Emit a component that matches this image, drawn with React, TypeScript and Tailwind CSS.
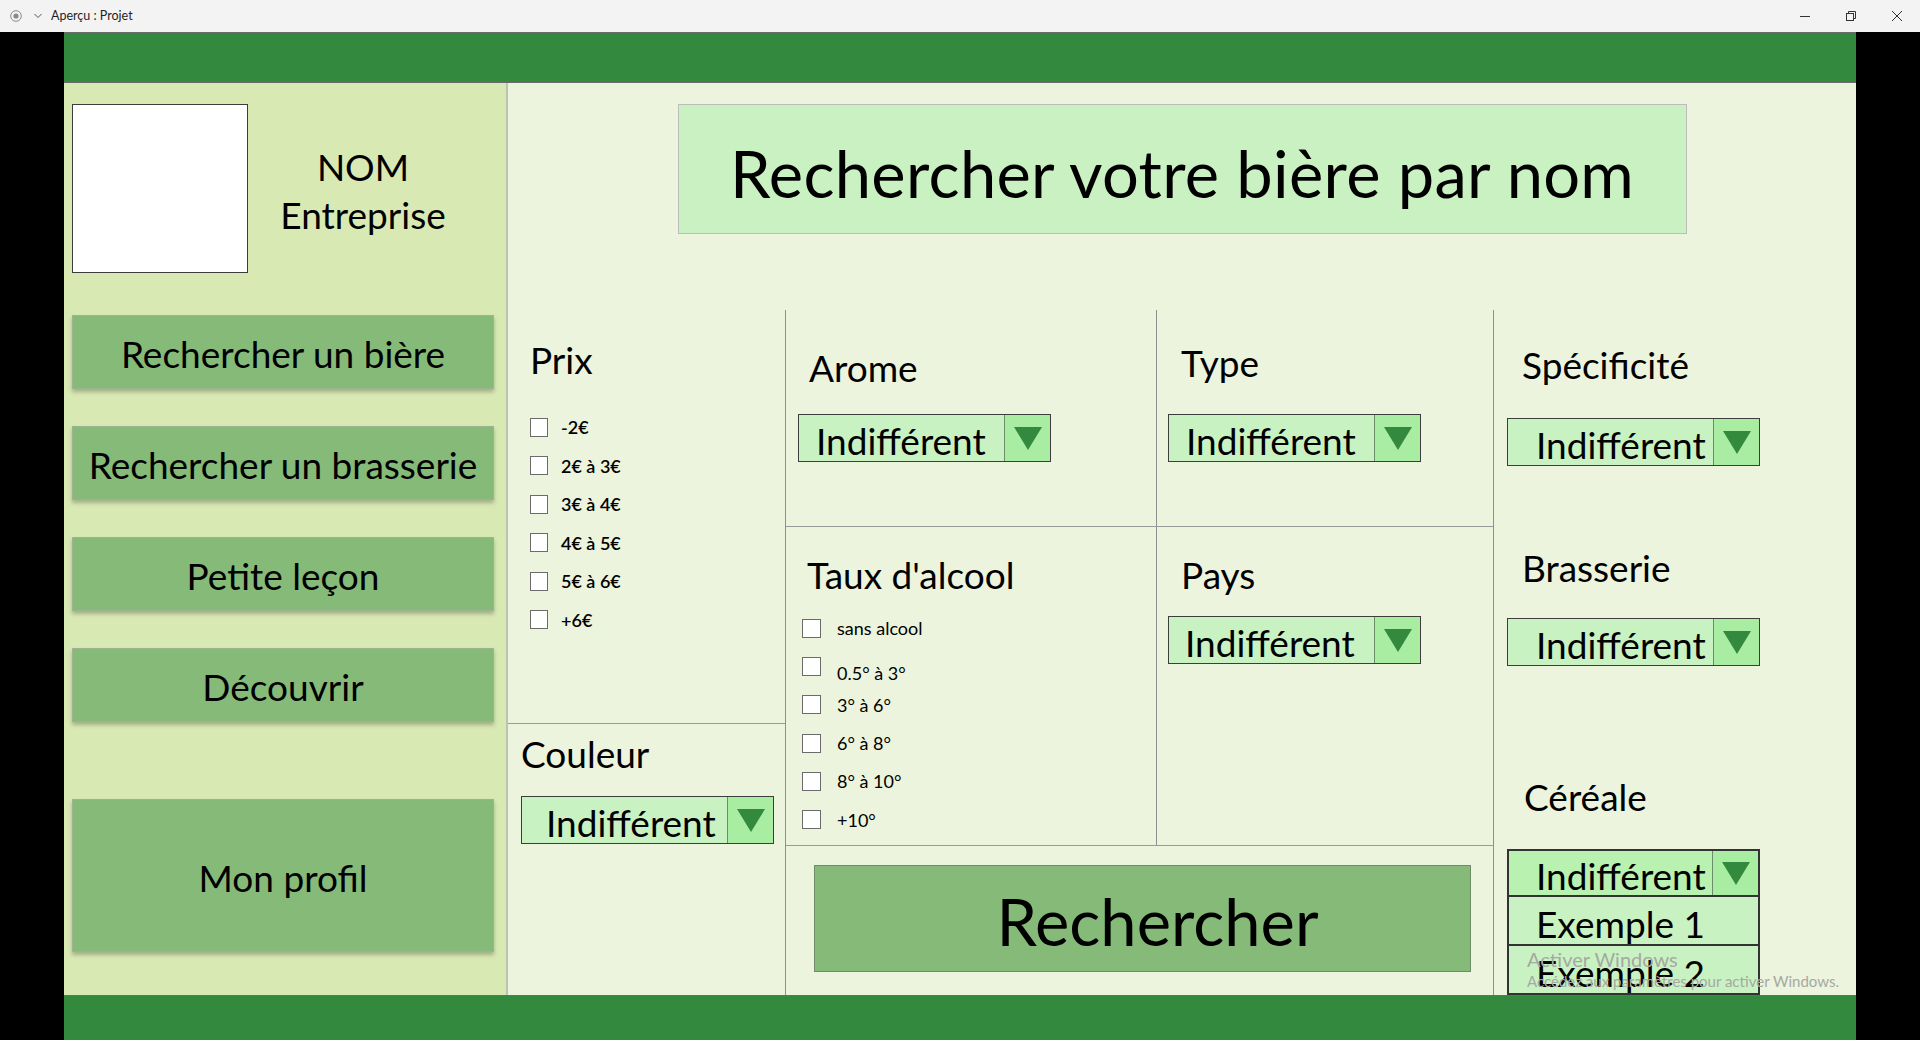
import React from "react";

type Drop = { pl: string; header?: boolean };

function Arrow() {
  return (
    <svg width="28" height="23" viewBox="0 0 28 23">
      <polygon points="0,0 28,0 14,23" fill="#33893e" />
    </svg>
  );
}

function Label({ text, className = "" }: { text: string; className?: string }) {
  return (
    <div className={"text-[37px] leading-[44px] " + className}>
      <span className="relative top-[3px]">{text}</span>
    </div>
  );
}

function Dropdown({ pl, header }: Drop) {
  return (
    <div
      className={
        "flex h-[48px] w-[253px] border " +
        (header ? "border-2 border-[#333333]" : "border-[#3d3d3d]")
      }
    >
      <div
        className={
          "flex flex-1 items-center text-[37px] leading-[44px] text-black " +
          (header ? "bg-[#b9f1b1] " : "bg-[#c9f2c2] ") +
          pl
        }
      >
        <span className="relative top-[3px]">Indifférent</span>
      </div>
      <div className="flex w-[46px] items-center justify-center border-l border-[#6d8c69] bg-[#a9eda2]">
        <Arrow />
      </div>
    </div>
  );
}

function Check({ label, box, gap, row, bold, shift }: { label: string; box: string; gap: string; row: string; bold?: boolean; shift?: boolean }) {
  return (
    <div className={"flex items-center " + row}>
      <div className={"border border-[#6b6b6b] bg-white " + box} />
      <span
        className={
          "text-[18px] leading-[24px] text-black " +
          gap +
          (bold ? " font-semibold" : "") +
          (shift ? " translate-y-[7px]" : "")
        }
      >
        {label}
      </span>
    </div>
  );
}

const navItems = ["Rechercher un bière", "Rechercher un brasserie", "Petite leçon", "Découvrir"];
const prix = ["-2€", "2€ à 3€", "3€ à 4€", "4€ à 5€", "5€ à 6€", "+6€"];
const alcool = ["sans alcool", "0.5° à 3°", "3° à 6°", "6° à 8°", "8° à 10°", "+10°"];

export default function App() {
  return (
    <div className="relative h-[1040px] w-[1920px] overflow-hidden font-['Lato','Open_Sans',sans-serif] text-black">
      {/* window title bar */}
      <div className="flex h-[32px] items-center bg-[#f3f3f3] text-[12.5px] text-[#1f1f1f]">
        <svg className="ml-[10px]" width="12" height="12" viewBox="0 0 12 12">
          <circle cx="6" cy="6" r="5.3" fill="none" stroke="#8a8a8a" strokeWidth="1" />
          <circle cx="6" cy="6" r="2.6" fill="#8a8a8a" />
        </svg>
        <svg className="ml-[12px]" width="8" height="6" viewBox="0 0 8 6">
          <polyline points="0.5,1 4,4.5 7.5,1" fill="none" stroke="#555" strokeWidth="1" />
        </svg>
        <span className="ml-[9px]">Aperçu : Projet</span>
        <div className="ml-auto flex h-full items-center">
          <div className="flex h-full w-[46px] items-center justify-center">
            <svg width="10" height="10" viewBox="0 0 10 10">
              <line x1="0" y1="5.5" x2="10" y2="5.5" stroke="#333" strokeWidth="1" />
            </svg>
          </div>
          <div className="flex h-full w-[46px] items-center justify-center">
            <svg width="10" height="10" viewBox="0 0 10 10">
              <rect x="0.5" y="2.5" width="7" height="7" fill="none" stroke="#333" strokeWidth="1" />
              <polyline points="2.5,2.5 2.5,0.5 9.5,0.5 9.5,7.5 7.5,7.5" fill="none" stroke="#333" strokeWidth="1" />
            </svg>
          </div>
          <div className="flex h-full w-[46px] items-center justify-center">
            <svg width="10" height="10" viewBox="0 0 10 10">
              <line x1="0" y1="0" x2="10" y2="10" stroke="#333" strokeWidth="1" />
              <line x1="10" y1="0" x2="0" y2="10" stroke="#333" strokeWidth="1" />
            </svg>
          </div>
        </div>
      </div>

      <div className="flex h-[1008px] bg-black">
        <div className="w-[64px]" />
        <div className="flex w-[1792px] flex-col">
          <div className="h-[51px] border-y border-[#6b6b6b] bg-[#33893e]" />

          <div className="flex h-[912px]">
            {/* sidebar */}
            <aside className="flex w-[444px] flex-col border-r-2 border-[#bcc3b0] bg-[#d9e9b3] pl-[8px] pr-[12px] pt-[21px]">
              <div className="flex">
                <div className="h-[169px] w-[176px] border border-[#3c3c3c] bg-white" />
                <div className="flex flex-1 translate-y-[2px] flex-col items-center justify-center pr-[16px] text-center text-[37px] leading-[48px]">
                  <span>NOM</span>
                  <span>Entreprise</span>
                </div>
              </div>
              <div className="mt-[42px] flex flex-col gap-[37px]">
                {navItems.map((item) => (
                  <button
                    key={item}
                    className="flex h-[74px] w-[422px] items-center justify-center border border-[#9db492] bg-[#86ba78] text-[37px] shadow-[0_3px_4px_rgba(0,0,0,0.25)]"
                  >
                    <span className="relative top-[2px]">{item}</span>
                  </button>
                ))}
              </div>
              <button className="mt-[77px] flex h-[153px] w-[422px] items-center justify-center border border-[#9db492] bg-[#86ba78] text-[37px] shadow-[0_3px_4px_rgba(0,0,0,0.25)]">
                <span className="relative top-[2px]">Mon profil</span>
              </button>
            </aside>

            {/* main */}
            <main className="flex w-[1348px] flex-col bg-[#ecf4dd] pt-[21px]">
              <div className="mx-auto flex h-[135px] w-[1009px] items-center justify-center border border-[#bdbdbd] bg-[#c9f1c1] text-[65px]">
                <span className="relative top-[5px] tracking-[0.3px]">Rechercher votre bière par nom</span>
              </div>

              <div className="mt-[76px] flex flex-1">
                {/* prix / couleur */}
                <div className="flex w-[278px] flex-col border-r border-[#8f8f8f]">
                  <div className="h-[414px] border-b border-[#9a9a9a] pl-[22px] pt-[25px]">
                    <Label text="Prix" />
                    <div className="mt-[29px] flex flex-col">
                      {prix.map((p) => (
                        <Check key={p} label={p} row="h-[38.5px]" box="h-[19px] w-[18px]" gap="ml-[13px]" bold />
                      ))}
                    </div>
                  </div>
                  <div className="flex-1 pl-[13px] pt-[5px]">
                    <Label text="Couleur" />
                    <div className="mt-[23px]">
                      <Dropdown pl="pl-[24px]" />
                    </div>
                  </div>
                </div>

                {/* arome / type / taux / pays */}
                <div className="flex w-[708px] flex-col border-r border-[#8f8f8f]">
                  <div className="flex h-[217px] border-b border-[#9a9a9a]">
                    <div className="w-[371px] border-r border-[#8f8f8f] pl-[12px] pt-[33px]">
                      <Label text="Arome" className="pl-[11px]" />
                      <div className="mt-[27px]">
                        <Dropdown pl="pl-[17px]" />
                      </div>
                    </div>
                    <div className="flex-1 pl-[11px] pt-[28px]">
                      <Label text="Type" className="pl-[13px]" />
                      <div className="mt-[32px]">
                        <Dropdown pl="pl-[17px]" />
                      </div>
                    </div>
                  </div>
                  <div className="flex h-[319px] border-b border-[#9a9a9a]">
                    <div className="w-[371px] border-r border-[#8f8f8f] pl-[16px] pt-[23px]">
                      <Label text="Taux d'alcool" className="pl-[5px]" />
                      <div className="mt-[15px] flex flex-col">
                        {alcool.map((a, i) => (
                          <Check key={a} label={a} row="h-[38.3px]" box="h-[19px] w-[19px]" gap="ml-[16px]" shift={i === 1} />
                        ))}
                      </div>
                    </div>
                    <div className="flex-1 pl-[11px] pt-[23px]">
                      <Label text="Pays" className="pl-[13px]" />
                      <div className="mt-[22px]">
                        <Dropdown pl="pl-[16px]" />
                      </div>
                    </div>
                  </div>
                  <div className="flex-1 pl-[28px] pt-[19px]">
                    <button className="flex h-[107px] w-[657px] items-center justify-center border border-[#6f8c69] bg-[#86ba78] pl-[30px] text-[65px]">
                      <span className="relative top-[3px]">Rechercher</span>
                    </button>
                  </div>
                </div>

                {/* specificite / brasserie / cereale */}
                <div className="flex flex-1 flex-col overflow-hidden pl-[13px] pt-[30px]">
                  <Label text="Spécificité" className="pl-[15px]" />
                  <div className="mt-[34px]">
                    <Dropdown pl="pl-[28px]" />
                  </div>
                  <Label text="Brasserie" className="mt-[77px] pl-[15px]" />
                  <div className="mt-[31px]">
                    <Dropdown pl="pl-[28px]" />
                  </div>
                  <Label text="Céréale" className="mt-[106px] pl-[17px]" />
                  <div className="mt-[33px] flex flex-col">
                    <Dropdown pl="pl-[27px]" header />
                    {["Exemple 1", "Exemple 2"].map((ex) => (
                      <div
                        key={ex}
                        className="flex h-[49px] w-[253px] items-center border-x-2 border-b-2 border-[#333333] bg-[#c9f2c2] pl-[27px] text-[37px] leading-[44px]"
                      >
                        <span className="relative top-[3px]">{ex}</span>
                      </div>
                    ))}
                  </div>
                </div>
              </div>
            </main>
          </div>

          <div className="h-[45px] border-t border-[#6b6b6b] bg-[#33893e]" />
        </div>
        <div className="w-[64px]" />
      </div>

      {/* windows activation watermark */}
      <div className="absolute left-[1527px] top-[947px] text-[#a6a8a3]">
        <div className="text-[20px] leading-[24px]">Activer Windows</div>
        <div className="text-[15px] leading-[20px]">Accédez aux paramètres pour activer Windows.</div>
      </div>
    </div>
  );
}
